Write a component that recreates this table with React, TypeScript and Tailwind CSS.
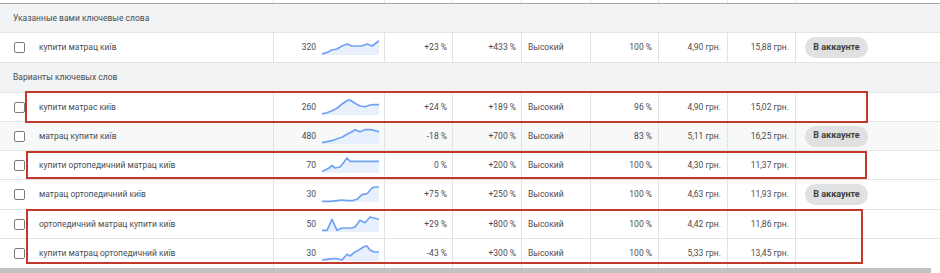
import React from "react";

type Pt = [number, number];

const COLS = "grid grid-cols-[274px_111px_68px_69px_69px_68px_69px_68px_1fr]";

function Spark({ pts }: { pts: Pt[] }) {
  const line = pts.map((p) => `${p[0]},${p[1]}`).join(" ");
  const area = `0,16 ${line} 57,16`;
  return (
    <svg width="57" height="17" viewBox="0 0 57 17" className="block shrink-0">
      <polygon points={area} fill="#e8f0fe" />
      <polyline points={line} fill="none" stroke="#6fa2f5" strokeWidth="1.7" strokeLinejoin="round" strokeLinecap="round" />
    </svg>
  );
}

type RowData = {
  kw: string;
  vol: string;
  spark: Pt[];
  a: string;
  b: string;
  comp: string;
  share: string;
  low: string;
  high: string;
  btn?: boolean;
  h: string;
  gray?: boolean;
  last?: boolean;
};

function Checkbox() {
  return <div className="w-[11px] h-[11px] border-[1.5px] border-[#777b80] rounded-[2px] bg-white" />;
}

function Row({ r }: { r: RowData }) {
  const cell = "border-r border-[#e3e3e3] flex items-center";
  return (
    <div
      className={`${COLS} ${r.h} ${r.gray ? "bg-[#f7f8f8]" : "bg-white"} ${r.last ? "" : "border-b border-[#e3e3e3]"} text-[8.5px] text-[#4a4d52]`}
    >
      <div className={`${cell} pl-[14px]`}>
        <Checkbox />
        <span className="ml-[14px] whitespace-nowrap">{r.kw}</span>
      </div>
      <div className={`${cell} justify-end pr-[5px] gap-[6px]`}>
        <span>{r.vol}</span>
        <Spark pts={r.spark} />
      </div>
      <div className={`${cell} justify-end pr-[5px]`}>{r.a}</div>
      <div className={`${cell} justify-end pr-[5px]`}>{r.b}</div>
      <div className={`${cell} pl-[6px]`}>{r.comp}</div>
      <div className={`${cell} justify-end pr-[6px]`}>{r.share}</div>
      <div className={`${cell} justify-end pr-[6px]`}>{r.low}</div>
      <div className={`${cell} justify-end pr-[6px]`}>{r.high}</div>
      <div className="flex items-center pl-[9px]">
        {r.btn ? (
          <div className="h-[21px] w-[63px] rounded-full bg-[#e0e1e3] flex items-center justify-center text-[9px] font-bold text-[#3c4043]">
            В аккаунте
          </div>
        ) : null}
      </div>
    </div>
  );
}

function Section({ title, h }: { title: string; h: string }) {
  return (
    <div className={`${h} bg-[#f1f3f4] border-b border-[#e3e3e3] flex items-center pl-[13px] text-[8.5px] text-[#4a4d52]`}>
      {title}
    </div>
  );
}

const row1: RowData = {
  kw: "купити матрац київ",
  vol: "320",
  spark: [[0, 15], [6, 13], [10, 11], [15, 10], [20, 7], [25, 5], [30, 7], [35, 7], [40, 7], [45, 5], [50, 7], [57, 2]],
  a: "+23 %",
  b: "+433 %",
  comp: "Высокий",
  share: "100 %",
  low: "4,90 грн.",
  high: "15,88 грн.",
  btn: true,
  h: "h-[30px]",
};

const rows: RowData[] = [
  {
    kw: "купити матрас київ",
    vol: "260",
    spark: [[0, 15], [5, 13.7], [10, 11.7], [15, 9.3], [20, 5], [25, 1.7], [28, 1], [33, 4.3], [38, 7], [43, 7.7], [48, 6], [52, 5.7], [57, 5.7]],
    a: "+24 %",
    b: "+189 %",
    comp: "Высокий",
    share: "96 %",
    low: "4,90 грн.",
    high: "15,02 грн.",
    h: "h-[29px]",
  },
  {
    kw: "матрац купити київ",
    vol: "480",
    spark: [[0, 14.7], [5, 13.7], [10, 12.7], [15, 10.7], [20, 9.3], [25, 6.3], [30, 3.7], [33, 1.7], [38, 3.7], [43, 1.7], [48, 1.7], [52, 2.3], [57, 4]],
    a: "-18 %",
    b: "+700 %",
    comp: "Высокий",
    share: "83 %",
    low: "5,11 грн.",
    high: "16,25 грн.",
    btn: true,
    gray: true,
    h: "h-[29px]",
  },
  {
    kw: "купити ортопедичний матрац київ",
    vol: "70",
    spark: [[0, 14.3], [3, 13.3], [7, 11], [10, 8.3], [13, 11], [18, 10], [22, 5], [25, 1], [28, 4.3], [33, 4.3], [57, 4.3]],
    a: "0 %",
    b: "+200 %",
    comp: "Высокий",
    share: "100 %",
    low: "4,30 грн.",
    high: "11,37 грн.",
    h: "h-[29px]",
  },
  {
    kw: "матрац ортопедичний київ",
    vol: "30",
    spark: [[0, 15.3], [8, 15.3], [15, 14.7], [20, 14], [25, 14.7], [30, 14.7], [35, 13.3], [40, 8.7], [45, 7.7], [50, 2], [53, 1], [57, 1]],
    a: "+75 %",
    b: "+250 %",
    comp: "Высокий",
    share: "100 %",
    low: "4,63 грн.",
    high: "11,93 грн.",
    btn: true,
    h: "h-[30px]",
  },
  {
    kw: "ортопедичний матрац купити київ",
    vol: "50",
    spark: [[0, 14.3], [5, 14.3], [10, 3.3], [15, 14.3], [20, 12], [25, 12], [30, 12], [33, 11], [38, 4.3], [43, 6.7], [48, 1], [52, 2], [57, 3.3]],
    a: "+29 %",
    b: "+800 %",
    comp: "Высокий",
    share: "100 %",
    low: "4,42 грн.",
    high: "11,86 грн.",
    h: "h-[29px]",
  },
  {
    kw: "купити матрац ортопедичний київ",
    vol: "30",
    spark: [[0, 15], [5, 14.3], [10, 13.7], [15, 13.7], [20, 15], [25, 9.3], [28, 11], [33, 7], [38, 4.3], [42, 1.7], [45, 1], [48, 5], [52, 7], [57, 7]],
    a: "-43 %",
    b: "+300 %",
    comp: "Высокий",
    share: "100 %",
    low: "5,33 грн.",
    high: "13,45 грн.",
    h: "h-[29px]",
    last: true,
  },
];

export default function App() {
  return (
    <div className="relative w-[940px] h-[273px] overflow-hidden bg-white" style={{ fontFamily: "Roboto, 'Noto Sans', Arial, sans-serif" }}>
      <div className={`${COLS} h-[4px] border-b border-[#a8a8a8]`}>
        {Array.from({ length: 8 }).map((_, i) => (
          <div key={i} className="border-r border-[#e3e3e3]" />
        ))}
        <div />
      </div>
      <Section title="Указанные вами ключевые слова" h="h-[29px]" />
      <Row r={row1} />
      <Section title="Варианты ключевых слов" h="h-[30px]" />
      {rows.map((r, i) => (
        <Row key={i} r={r} />
      ))}
      <div className="flex h-[5px]">
        <div className="w-[931px] bg-[#c2c2c2]" />
        <div className="flex-1 bg-white" />
      </div>

      <div className="absolute left-[25px] top-[91px] w-[843px] h-[32px] border-2 border-[#c0392b] pointer-events-none" />
      <div className="absolute left-[26px] top-[151px] w-[841px] h-[28px] border-2 border-[#c0392b] pointer-events-none" />
      <div className="absolute left-[26px] top-[209px] w-[837px] h-[55px] border-2 border-[#c0392b] pointer-events-none" />
    </div>
  );
}
